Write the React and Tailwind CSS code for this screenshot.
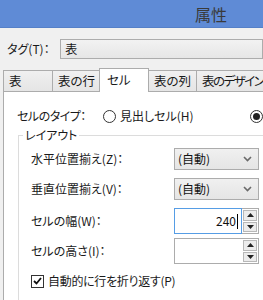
import React from "react";

function Chevron() {
  return (
    <svg width="9" height="6" viewBox="0 0 9 6">
      <polyline points="1,1 4.5,4.5 8,1" fill="none" stroke="#6a6a6a" strokeWidth="1.6" />
    </svg>
  );
}

function Dropdown() {
  return (
    <div className="flex h-[22px] w-[85px] items-center justify-between border border-[#acacac] bg-gradient-to-b from-[#f0f0f0] to-[#e5e5e5] pl-[3px] pr-[6px] text-[12px] text-[#111]">
      <span>(自動)</span>
      <Chevron />
    </div>
  );
}

function Arrow({ up }) {
  return (
    <svg width="7" height="4" viewBox="0 0 7 4">
      {up ? <polygon points="0,4 7,4 3.5,0" fill="#222" /> : <polygon points="0,0 7,0 3.5,4" fill="#222" />}
    </svg>
  );
}

function Spin({ value, focused }) {
  return (
    <div className="flex h-[26px] w-[85px]">
      <div
        className={`flex flex-1 items-center justify-end border bg-white pr-[3px] text-[12px] text-[#111] ${
          focused ? "border-[#569de5]" : "border-[#acacac] border-r-0"
        }`}
      >
        {value}
        {focused && <span className="ml-px inline-block h-[15px] w-px bg-black" />}
      </div>
      <div className="flex w-[17px] flex-col gap-px border border-l-0 border-[#acacac] bg-white p-px">
        <div className="flex flex-1 items-center justify-center border border-[#b8b8b8] bg-[#ececec]">
          <Arrow up />
        </div>
        <div className="flex flex-1 items-center justify-center border border-[#b8b8b8] bg-[#ececec]">
          <Arrow />
        </div>
      </div>
    </div>
  );
}

export default function App() {
  const tabs = [
    { t: "表", w: "w-[50px]", tr: "" },
    { t: "表の行", w: "w-[48px]", tr: "" },
    { t: "セル", w: "w-[50px]", sel: true, tr: "" },
    { t: "表の列", w: "w-[49px]", tr: "" },
    { t: "表のデザイン", w: "w-[80px]", tr: "tracking-[-1.5px]" },
  ];
  return (
    <div className="relative flex h-[300px] w-[263px] flex-col overflow-hidden bg-[#f0f0f0] font-['Noto_Sans_CJK_JP',sans-serif] text-[#1a1a1a] [font-feature-settings:'palt']">
      <div className="h-[28px] shrink-0 border-b border-[#5580c8] bg-[#5f8bd6] pl-[195px] text-[16px] leading-[28px] text-[#3a3a3a]">
        属性
      </div>
      <div className="mt-[11px] flex h-[20px] shrink-0 items-center">
        <div className="w-[65px] pl-[7px] text-[12px]">タグ(T)：</div>
        <div className="flex h-[20px] w-[220px] items-center border border-[#acacac] bg-gradient-to-b from-[#f2f2f2] to-[#e6e6e6] pl-[4px] text-[12px]">
          表
        </div>
      </div>
      <div className="relative z-10 ml-[3px] mt-[9px] flex h-[23px] shrink-0 items-end">
        {tabs.map((tab, i) =>
          tab.sel ? (
            <div
              key={i}
              className={`${tab.w} -mb-px -ml-px flex h-[24px] shrink-0 items-center border border-b-0 border-[#acacac] bg-white pl-[7px] text-[12.5px]`}
            >
              {tab.t}
            </div>
          ) : (
            <div
              key={i}
              className={`${tab.w} ${tab.tr} ${i === 0 ? "" : "-ml-px"} flex h-[21px] shrink-0 items-center whitespace-nowrap border border-b-0 border-[#acacac] bg-gradient-to-b from-[#f0f0f0] to-[#e5e5e5] pl-[5px] text-[12.5px]`}
            >
              {tab.t}
            </div>
          )
        )}
      </div>
      <div className="ml-[3px] flex-1 border-l border-t border-[#acacac] bg-white pl-[13px] pt-[16px]">
        <div className="flex h-[16px] items-center text-[12px]">
          <div className="w-[93px] whitespace-nowrap tracking-[-0.5px]">セルのタイプ：</div>
          <div className="h-[13px] w-[13px] shrink-0 rounded-full border border-[#333] bg-white" />
          <div className="ml-[4px] w-[130px] shrink-0 whitespace-nowrap">見出しセル(H)</div>
          <div className="flex h-[13px] w-[13px] shrink-0 items-center justify-center rounded-full border border-[#333] bg-white">
            <div className="h-[7px] w-[7px] rounded-full bg-[#222]" />
          </div>
        </div>
        <div className="relative ml-px mt-[11px] h-[200px] border-l border-t border-[#dcdcdc] pl-[12px] pt-[12px] text-[12px]">
          <div className="absolute -top-[9px] left-[4px] bg-white px-[2px] text-[12px] leading-[16px]">
            レイアウト
          </div>
          <div className="flex flex-col">
            <div className="flex items-center">
              <div className="w-[143px] whitespace-nowrap">水平位置揃え(Z)：</div>
              <Dropdown />
            </div>
            <div className="mt-[8px] flex items-center">
              <div className="w-[143px] whitespace-nowrap">垂直位置揃え(V)：</div>
              <Dropdown />
            </div>
            <div className="mt-[8px] flex items-center">
              <div className="w-[143px] whitespace-nowrap">セルの幅(W)：</div>
              <Spin value="240" focused />
            </div>
            <div className="mt-[4px] flex items-center">
              <div className="w-[143px] whitespace-nowrap">セルの高さ(I)：</div>
              <Spin value="" />
            </div>
            <div className="mt-[8px] flex items-center">
              <div className="flex h-[13px] w-[13px] items-center justify-center border border-[#333] bg-white">
                <svg width="9" height="8" viewBox="0 0 9 8">
                  <polyline points="1,4 3.5,6.5 8,1" fill="none" stroke="#111" strokeWidth="1.8" />
                </svg>
              </div>
              <div className="ml-[4px] whitespace-nowrap tracking-[-0.3px]">自動的に行を折り返す(P)</div>
            </div>
          </div>
        </div>
      </div>
    </div>
  );
}
